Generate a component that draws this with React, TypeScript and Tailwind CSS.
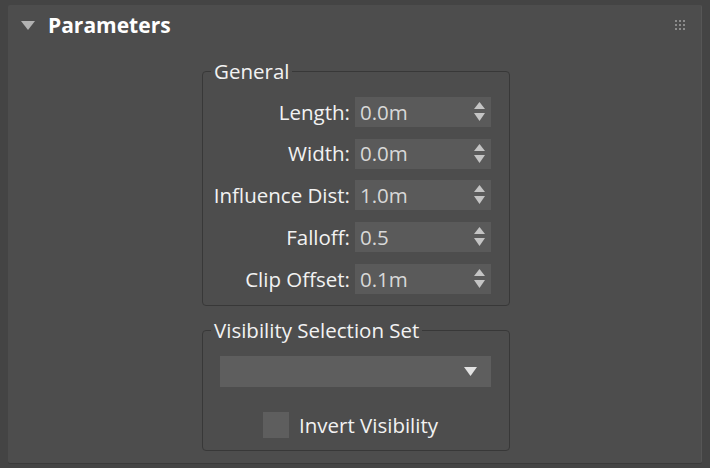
const font = { fontFamily: '"Open Sans", "Noto Sans", sans-serif' };

type Field = { label: string; value: string };

const fields: Field[] = [
  { label: "Length:", value: "0.0m" },
  { label: "Width:", value: "0.0m" },
  { label: "Influence Dist:", value: "1.0m" },
  { label: "Falloff:", value: "0.5" },
  { label: "Clip Offset:", value: "0.1m" },
];

function Spinner({ value }: { value: string }) {
  return (
    <div className="relative flex h-[30px] w-[136px] items-center bg-[#5a5a5a] pl-[5px] text-[20.5px] text-[#d8d8d8]">
      <span className="leading-none">{value}</span>
      <svg className="absolute right-[6px] top-[5px]" width="11" height="19" viewBox="0 0 11 19">
        <polygon points="5.5,0 11,7 0,7" fill="#c4c4c4" />
        <polygon points="0,11 11,11 5.5,19" fill="#c4c4c4" />
      </svg>
    </div>
  );
}

function Group({ title, children, className }: { title: string; children: React.ReactNode; className?: string }) {
  return (
    <div className={"relative ml-[194px] w-[308px] rounded-[4px] border border-[#383838] " + (className ?? "")}>
      <span className="absolute left-[8px] top-[-13px] bg-[#4d4d4d] px-[3px] text-[20.5px] leading-[24px] text-[#f2f2f2]">
        {title}
      </span>
      {children}
    </div>
  );
}

export default function App() {
  return (
    <div className="h-[468px] w-[710px] bg-[#444444] pl-[8px] pr-[8px] pt-[5px]" style={font}>
      <div className="h-[458px] rounded-[2px] border-r border-[#565656] bg-[#4d4d4d] shadow-[0_1px_0_#3a3a3a]">
        <div className="flex h-[42px] items-center pl-[13px] pr-[16px]">
          <svg className="mb-[2px]" width="14" height="9" viewBox="0 0 14 9">
            <polygon points="0,0 14,0 7,9" fill="#b2b2b2" />
          </svg>
          <span className="ml-[13px] text-[21px] font-bold text-white">Parameters</span>
          <svg className="mb-[2px] ml-auto" width="10" height="10" viewBox="0 0 10 10">
            {[0, 4, 8].map((y) =>
              [0, 4, 8].map((x) => <rect key={`${x}-${y}`} x={x} y={y} width="2" height="2" fill="#8c8c8c" />)
            )}
          </svg>
        </div>

        <Group title="General" className="mt-[24px] pb-[11px] pt-[25px]">
          <div className="flex flex-col gap-[11.7px]">
            {fields.map((f) => (
              <div key={f.label} className="flex items-center justify-end gap-[5px] pr-[18px]">
                <span className="text-[20.5px] leading-none text-[#f2f2f2]">{f.label}</span>
                <Spinner value={f.value} />
              </div>
            ))}
          </div>
        </Group>

        <Group title="Visibility Selection Set" className="mt-[24px] pb-[12px] pt-[25px]">
          <div className="relative ml-[17px] h-[31px] w-[271px] bg-[#5e5e5e]">
            <svg className="absolute right-[14px] top-[11px]" width="13" height="9" viewBox="0 0 13 9">
              <polygon points="0,0 13,0 6.5,9" fill="#e2e2e2" />
            </svg>
          </div>
          <div className="mt-[25px] flex items-center pl-[60px]">
            <div className="h-[26px] w-[26px] bg-[#5e5e5e]" />
            <span className="ml-[10px] text-[20.5px] leading-none text-[#f2f2f2]">Invert Visibility</span>
          </div>
        </Group>
      </div>
    </div>
  );
}
